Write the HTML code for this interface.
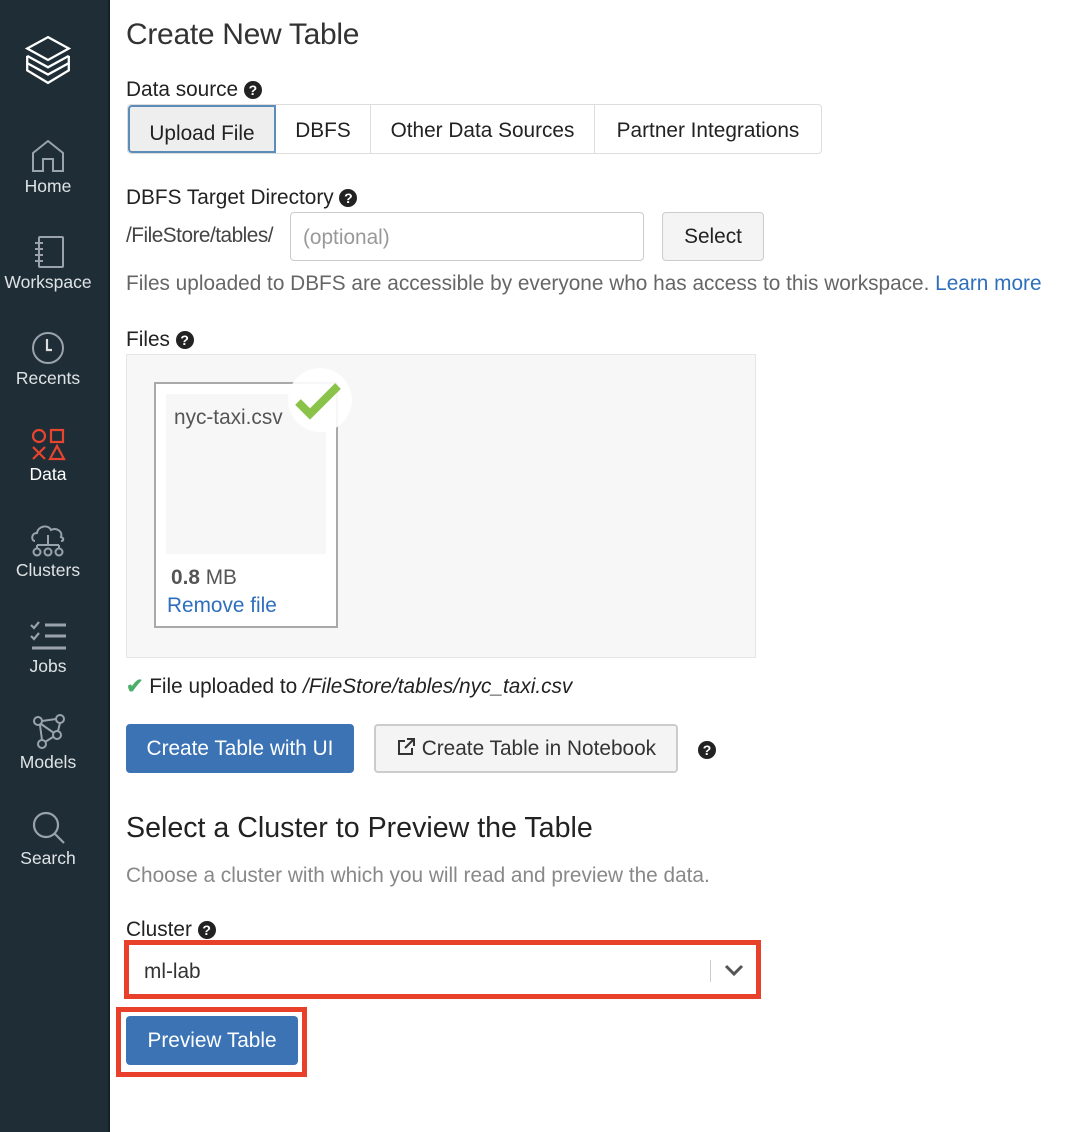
<!DOCTYPE html>
<html><head><meta charset="utf-8"><style>
*{box-sizing:border-box;margin:0;padding:0}
body{width:1080px;height:1132px;background:#fff;font-family:"Liberation Sans",sans-serif;color:#222;position:relative;overflow:hidden;font-size:20.8px}
.sb{position:absolute;left:0;top:0;width:110px;height:1132px;background:#1f2d36;border-right:2px solid #15202a}
.ni{position:absolute;left:0;width:96px;text-align:center;color:#dfe3e6;font-size:17.5px}
.ni svg{display:block;margin:0 auto 2px}
.a{position:absolute;white-space:nowrap}
.q{display:inline-block;width:18px;height:18px;border-radius:50%;background:#222;color:#fff;font-size:14px;font-weight:bold;text-align:center;line-height:18px;vertical-align:1px}
.btnb{position:absolute;background:#3b73b5;color:#fff;border-radius:4px;text-align:center}
</style></head><body>
<div class="sb">
<div class="ni" style="top:34px"><svg width="50" height="52" viewBox="0 0 48 50" fill="none" stroke="#fff" stroke-width="2.2"><path d="M24 3 L44 14 L24 25 L4 14 Z"/><path d="M4 21 L24 32 L44 21"/><path d="M4 28 L24 39 L44 28"/><path d="M4 21 V35 L24 47 L44 35 V21"/></svg></div>
<div class="ni" style="top:138px"><svg width="36" height="36" viewBox="0 0 36 34" fill="none" stroke="#9aa3ad" stroke-width="2"><path d="M3 14 L18 2 L33 14 V32 H23 V20 H13 V32 H3 Z"/></svg>Home</div>
<div class="ni" style="top:234px"><svg width="36" height="36" viewBox="0 0 36 34" fill="none" stroke="#9aa3ad" stroke-width="2"><rect x="9" y="2" width="24" height="30" rx="1"/><path d="M5 8h8M5 14h8M5 20h8M5 26h8"/></svg>Workspace</div>
<div class="ni" style="top:330px"><svg width="36" height="36" viewBox="0 0 36 34" fill="none" stroke="#9aa3ad" stroke-width="2"><circle cx="18" cy="17" r="15"/><path d="M17 8 V19 H22" stroke="#ddd" stroke-width="2.2"/></svg>Recents</div>
<div class="ni" style="top:426px;color:#fff"><svg width="36" height="36" viewBox="0 0 36 34" fill="none" stroke="#e8442e" stroke-width="2.2"><circle cx="9" cy="9" r="6"/><rect x="21" y="3" width="12" height="12"/><path d="M3 20 L15 32 M15 20 L3 32"/><path d="M27 19 L34 32 H20 Z"/></svg>Data</div>
<div class="ni" style="top:522px"><svg width="36" height="36" viewBox="0 0 36 34" fill="none" stroke="#9aa3ad" stroke-width="2"><path d="M5 18 C1 18 1 10 7 10 C8 3 18 1 21 7 C27 4 33 9 31 14 C34 15 34 18 31 18"/><path d="M18 12 V22 M7 22 H29 M7 22 V25 M29 22 V25"/><circle cx="7" cy="29" r="3.5"/><circle cx="18" cy="29" r="3.5"/><circle cx="29" cy="29" r="3.5"/></svg>Clusters</div>
<div class="ni" style="top:618px"><svg width="40" height="36" viewBox="0 0 40 34" fill="none" stroke="#9aa3ad" stroke-width="3"><path d="M3 6 L6 9 L11 3 M3 17 L6 20 L11 14" stroke-width="2.2"/><path d="M17 6 H38 M17 17 H38 M4 29 H38"/></svg>Jobs</div>
<div class="ni" style="top:714px"><svg width="36" height="36" viewBox="0 0 36 34" fill="none" stroke="#9aa3ad" stroke-width="2"><circle cx="8" cy="6" r="4"/><circle cx="30" cy="4" r="4"/><circle cx="27" cy="20" r="4"/><circle cx="12" cy="29" r="4"/><path d="M12 6 L26 4 M30 8 L28 16 M23 22 L15 27 M10 10 L12 25 M11 9 L24 18"/></svg>Models</div>
<div class="ni" style="top:810px"><svg width="36" height="36" viewBox="0 0 36 34" fill="none" stroke="#9aa3ad" stroke-width="2.2"><circle cx="16" cy="14" r="12"/><path d="M25 23 L34 32"/></svg>Search</div>
</div>

<div class="a" style="left:126px;top:18px;font-size:30px;color:#333;letter-spacing:-0.3px">Create New Table</div>
<div class="a" style="left:126px;top:78px">Data source <span class="q">?</span></div>
<div class="a" style="left:127px;top:104px;width:695px;height:50px;border:1px solid #ddd;border-radius:4px"></div>
<div class="a" style="left:128px;top:105px;width:148px;height:48px;background:#eee;border:2px solid #5b8db8;border-radius:4px 0 0 4px;text-align:center;line-height:54px">Upload File</div>
<div class="a" style="left:276px;top:105px;width:95px;height:48px;border-right:1px solid #ddd;text-align:center;line-height:52px">DBFS</div>
<div class="a" style="left:371px;top:105px;width:224px;height:48px;border-right:1px solid #ddd;text-align:center;line-height:52px">Other Data Sources</div>
<div class="a" style="left:595px;top:105px;width:226px;height:48px;text-align:center;line-height:52px">Partner Integrations</div>

<div class="a" style="left:126px;top:186px">DBFS Target Directory <span class="q">?</span></div>
<div class="a" style="left:126px;top:224px;color:#444;letter-spacing:-0.5px">/FileStore/tables/</div>
<div class="a" style="left:290px;top:212px;width:354px;height:49px;border:1px solid #ccc;border-radius:4px;color:#999;padding:13px 12px">(optional)</div>
<div class="a" style="left:662px;top:212px;width:102px;height:49px;border:1px solid #ccc;border-radius:4px;background:#f4f4f4;text-align:center;line-height:48px">Select</div>
<div class="a" style="left:126px;top:272px;color:#666">Files uploaded to DBFS are accessible by everyone who has access to this workspace. <span style="color:#2e6fbd">Learn more</span></div>

<div class="a" style="left:126px;top:328px">Files <span class="q">?</span></div>
<div class="a" style="left:126px;top:354px;width:630px;height:304px;background:#f7f7f7;border:1px solid #e5e5e5"></div>
<div class="a" style="left:154px;top:382px;width:184px;height:246px;background:#fff;border:2px solid #a9a9a9"></div>
<div class="a" style="left:166px;top:394px;width:160px;height:160px;background:#f7f7f7"></div>
<div class="a" style="left:174px;top:406px;color:#555">nyc-taxi.csv</div>
<div class="a" style="left:288px;top:368px;width:64px;height:64px;border-radius:50%;background:#fff;opacity:.9"></div>
<svg class="a" style="left:294px;top:380px" width="50" height="40" viewBox="0 0 50 40"><path d="M4 22 L16 34 L44 6" fill="none" stroke="#8bc34a" stroke-width="8"/></svg>
<div class="a" style="left:171px;top:566px;color:#555"><b>0.8</b> MB</div>
<div class="a" style="left:167px;top:594px;color:#2e6fbd">Remove file</div>

<div class="a" style="left:126px;top:674px"><span style="color:#4caf6a;font-weight:bold">✔</span> File uploaded to <i>/FileStore/tables/nyc_taxi.csv</i></div>
<div class="btnb" style="left:126px;top:724px;width:228px;height:49px;line-height:49px">Create Table with UI</div>
<div class="a" style="left:374px;top:724px;width:304px;height:49px;border:2px solid #ccc;border-radius:4px;background:#f4f4f4;text-align:center;line-height:46px;color:#333">
<svg width="20" height="20" viewBox="0 0 20 20" style="vertical-align:-2px" fill="none" stroke="#333" stroke-width="2"><path d="M9 4H3v13h13v-6"/><path d="M11 2h7v7M18 2 L9 11"/></svg> Create Table in Notebook</div>
<div class="a" style="left:698px;top:738px"><span class="q">?</span></div>

<div class="a" style="left:126px;top:812px;font-size:28.6px;color:#222">Select a Cluster to Preview the Table</div>
<div class="a" style="left:126px;top:864px;color:#888">Choose a cluster with which you will read and preview the data.</div>
<div class="a" style="left:126px;top:918px">Cluster <span class="q">?</span></div>
<div class="a" style="left:124px;top:940px;width:637px;height:59px;border:5px solid #e8402a;background:#fff"></div>
<div class="a" style="left:144px;top:960px;color:#333">ml-lab</div>
<div class="a" style="left:710px;top:960px;width:1px;height:22px;background:#ccc"></div>
<svg class="a" style="left:722px;top:962px" width="24" height="16" viewBox="0 0 24 16"><path d="M4 4 L12 12 L20 4" fill="none" stroke="#555" stroke-width="3"/></svg>
<div class="a" style="left:116px;top:1007px;width:191px;height:70px;border:5px solid #e8402a"></div>
<div class="btnb" style="left:126px;top:1016px;width:172px;height:49px;line-height:49px">Preview Table</div>
</body></html>
